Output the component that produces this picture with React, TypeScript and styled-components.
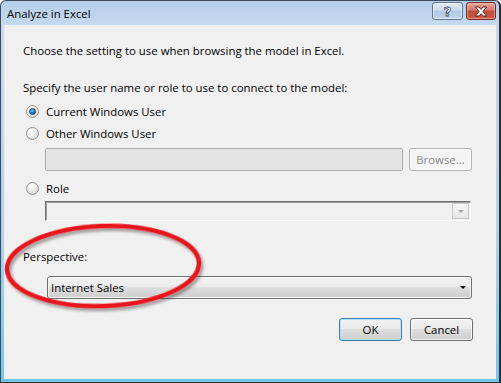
import React from 'react';
import styled, { createGlobalStyle } from 'styled-components';

const GlobalStyle = createGlobalStyle`
  html, body {
    margin: 0;
    padding: 0;
    background: #ffffff;
  }
  body {
    font-family: "Open Sans", "Noto Sans", sans-serif;
    font-size: 11.4px;
    color: #000;
  }
`;

const Window = styled.div`
  position: relative;
  width: 501px;
  height: 383px;
  box-sizing: border-box;
  border: 1px solid #3c4a5a;
  border-right: 2px solid #2a2f36;
  border-bottom-color: #2a2f36;
  border-radius: 6px 6px 0 0;
  background: linear-gradient(#b6cfea 0, #c6d9ef 25px, #b1d3ee 60%, #6fc6f0 100%);
  padding: 0 3px 3px 3px;
  display: flex;
  flex-direction: column;
`;

const TitleBar = styled.div`
  height: 24px;
  display: flex;
  align-items: flex-start;
  padding-left: 3px;
`;

const Title = styled.div`
  flex: 1;
  line-height: 25px;
  color: #000;
`;

const CaptionButton = styled.div<{ $close?: boolean }>`
  margin-top: 1px;
  width: ${p => (p.$close ? 30 : 31)}px;
  height: 18px;
  box-sizing: border-box;
  border: 1px solid ${p => (p.$close ? '#6b2a24' : '#5f7590')};
  border-radius: 3px;
  margin-left: 3px;
  display: flex;
  align-items: center;
  justify-content: center;
  box-shadow: inset 0 0 0 1px ${p => (p.$close ? 'rgba(255,200,190,0.55)' : 'rgba(255,255,255,0.6)')};
  background: ${p =>
    p.$close
      ? 'linear-gradient(#e9a99b 0, #d47766 45%, #c24a38 50%, #c95a45 100%)'
      : 'linear-gradient(#e1ebf6 0, #c9daee 45%, #b2c9e4 50%, #bed3ec 100%)'};
`;

const HelpGlyph = styled.span`
  font-family: "DejaVu Sans", sans-serif;
  font-weight: bold;
  font-size: 13px;
  line-height: 13px;
  color: #ffffff;
  -webkit-text-stroke: 0.8px #3d4d63;
`;

const Client = styled.div`
  flex: 1;
  background: #f0f0f0;
  padding: 18px 23px 0 19px;
  display: flex;
  flex-direction: column;
`;

const Text = styled.div<{ $top?: number }>`
  line-height: 16px;
  margin-top: ${p => p.$top ?? 0}px;
  white-space: nowrap;
`;

const RadioRow = styled.div<{ $top: number }>`
  display: flex;
  align-items: center;
  gap: 7px;
  height: 16px;
  margin-top: ${p => p.$top}px;
  margin-left: 3px;
`;

const Radio = styled.span<{ $checked?: boolean }>`
  position: relative;
  flex: none;
  width: 13px;
  height: 13px;
  box-sizing: border-box;
  border-radius: 50%;
  border: 1px solid #8d8d8d;
  background: radial-gradient(circle at 35% 30%, #ffffff 0, #ececec 45%, #c9c9c9 100%);

  &::after {
    content: '';
    position: absolute;
    inset: 2px;
    border-radius: 50%;
    display: ${p => (p.$checked ? 'block' : 'none')};
    border: 1px solid #1a3d63;
    box-sizing: border-box;
    background: radial-gradient(circle at 40% 35%, #8ed0fa 0, #2b7fc6 45%, #0d3d6e 100%);
  }
`;

const FieldRow = styled.div<{ $top: number; $left?: number }>`
  display: flex;
  gap: 6px;
  margin-top: ${p => p.$top}px;
  margin-left: ${p => p.$left ?? 22}px;
`;

const TextBox = styled.div`
  width: 358px;
  height: 23px;
  box-sizing: border-box;
  border: 1px solid #abadb3;
  border-radius: 2px;
  background: #e4e4e4;
`;

const PushButton = styled.div<{ $default?: boolean; $disabled?: boolean }>`
  width: 63px;
  height: 23px;
  box-sizing: border-box;
  border-radius: 3px;
  display: flex;
  align-items: center;
  justify-content: center;
  border: 1px solid ${p => (p.$disabled ? '#adb2b5' : p.$default ? '#3c7fb1' : '#707070')};
  color: ${p => (p.$disabled ? '#8a8a8a' : '#000')};
  background: ${p =>
    p.$disabled
      ? '#f4f4f4'
      : 'linear-gradient(#f2f2f2 0, #ebebeb 50%, #dddddd 50%, #cfcfcf 100%)'};
  box-shadow: inset 0 0 0 1px ${p => (p.$default ? '#a8e6fb' : 'rgba(255,255,255,0.75)')};
`;

const RoleCombo = styled.div`
  width: 426px;
  height: 20px;
  box-sizing: border-box;
  border: 1px solid;
  border-color: #6d6d6d #ffffff #ffffff #6d6d6d;
  box-shadow: inset 1px 1px 0 #a0a0a0;
  background: #f0f0f0;
  display: flex;
  justify-content: flex-end;
  align-items: center;
  padding-right: 1px;
`;

const RoleArrow = styled.div`
  width: 17px;
  height: 16px;
  box-sizing: border-box;
  border: 1px solid #c9c9c9;
  background: linear-gradient(#f7f7f7, #e6e6e6);
  display: flex;
  align-items: center;
  justify-content: center;
`;

const Triangle = styled.span<{ $color: string; $w: number }>`
  width: 0;
  height: 0;
  border-left: ${p => p.$w}px solid transparent;
  border-right: ${p => p.$w}px solid transparent;
  border-top: ${p => p.$w}px solid ${p => p.$color};
`;

const DropList = styled.div`
  width: 425px;
  height: 23px;
  box-sizing: border-box;
  border: 1px solid #707070;
  border-radius: 3px;
  box-shadow: inset 0 0 0 1px rgba(255, 255, 255, 0.8);
  background: linear-gradient(#f2f2f2 0, #ebebeb 50%, #dddddd 50%, #cfcfcf 100%);
  display: flex;
  align-items: center;
  justify-content: space-between;
  padding: 0 5px 0 3px;
`;

const ButtonRow = styled.div`
  display: flex;
  justify-content: flex-end;
  gap: 8px;
  margin-top: 19px;
`;

const Annotation = styled.svg`
  position: absolute;
  left: -1px;
  top: -1px;
  pointer-events: none;
`;

export default function App() {
  return (
    <>
      <GlobalStyle />
      <Window>
        <TitleBar>
          <Title>Analyze in Excel</Title>
          <CaptionButton>
            <HelpGlyph>?</HelpGlyph>
          </CaptionButton>
          <CaptionButton $close>
            <svg width="14" height="11" viewBox="0 0 14 11">
              <path
                d="M1.5 1 H5 L7 3.3 L9 1 H12.5 L8.9 5.5 L12.5 10 H9 L7 7.7 L5 10 H1.5 L5.1 5.5 Z"
                fill="#ffffff"
                stroke="#4a1c16"
                strokeWidth="0.9"
                strokeLinejoin="round"
              />
            </svg>
          </CaptionButton>
        </TitleBar>
        <Client>
          <Text>Choose the setting to use when browsing the model in Excel.</Text>
          <Text $top={21}>Specify the user name or role to use to connect to the model:</Text>
          <RadioRow $top={7}>
            <Radio $checked />
            <span>Current Windows User</span>
          </RadioRow>
          <RadioRow $top={6}>
            <Radio />
            <span>Other Windows User</span>
          </RadioRow>
          <FieldRow $top={7}>
            <TextBox />
            <PushButton $disabled>Browse...</PushButton>
          </FieldRow>
          <RadioRow $top={9}>
            <Radio />
            <span>Role</span>
          </RadioRow>
          <FieldRow $top={5}>
            <RoleCombo>
              <RoleArrow>
                <Triangle $color="#a3a3a3" $w={3} />
              </RoleArrow>
            </RoleCombo>
          </FieldRow>
          <Text $top={28}>Perspective:</Text>
          <FieldRow $top={11} $left={24}>
            <DropList>
              <span>Internet Sales</span>
              <Triangle $color="#000000" $w={3.5} />
            </DropList>
          </FieldRow>
          <ButtonRow>
            <PushButton $default>OK</PushButton>
            <PushButton>Cancel</PushButton>
          </ButtonRow>
        </Client>
        <Annotation width="501" height="383" viewBox="0 0 501 383">
          <defs>
            <filter id="shadow" x="-10%" y="-20%" width="130%" height="150%">
              <feDropShadow dx="2" dy="3" stdDeviation="1.8" floodColor="#000" floodOpacity="0.35" />
            </filter>
          </defs>
          <ellipse
            cx="103"
            cy="266"
            rx="96"
            ry="40"
            fill="none"
            stroke="#e8161b"
            strokeWidth="4.5"
            transform="rotate(-2 103 266)"
            filter="url(#shadow)"
          />
        </Annotation>
      </Window>
    </>
  );
}
